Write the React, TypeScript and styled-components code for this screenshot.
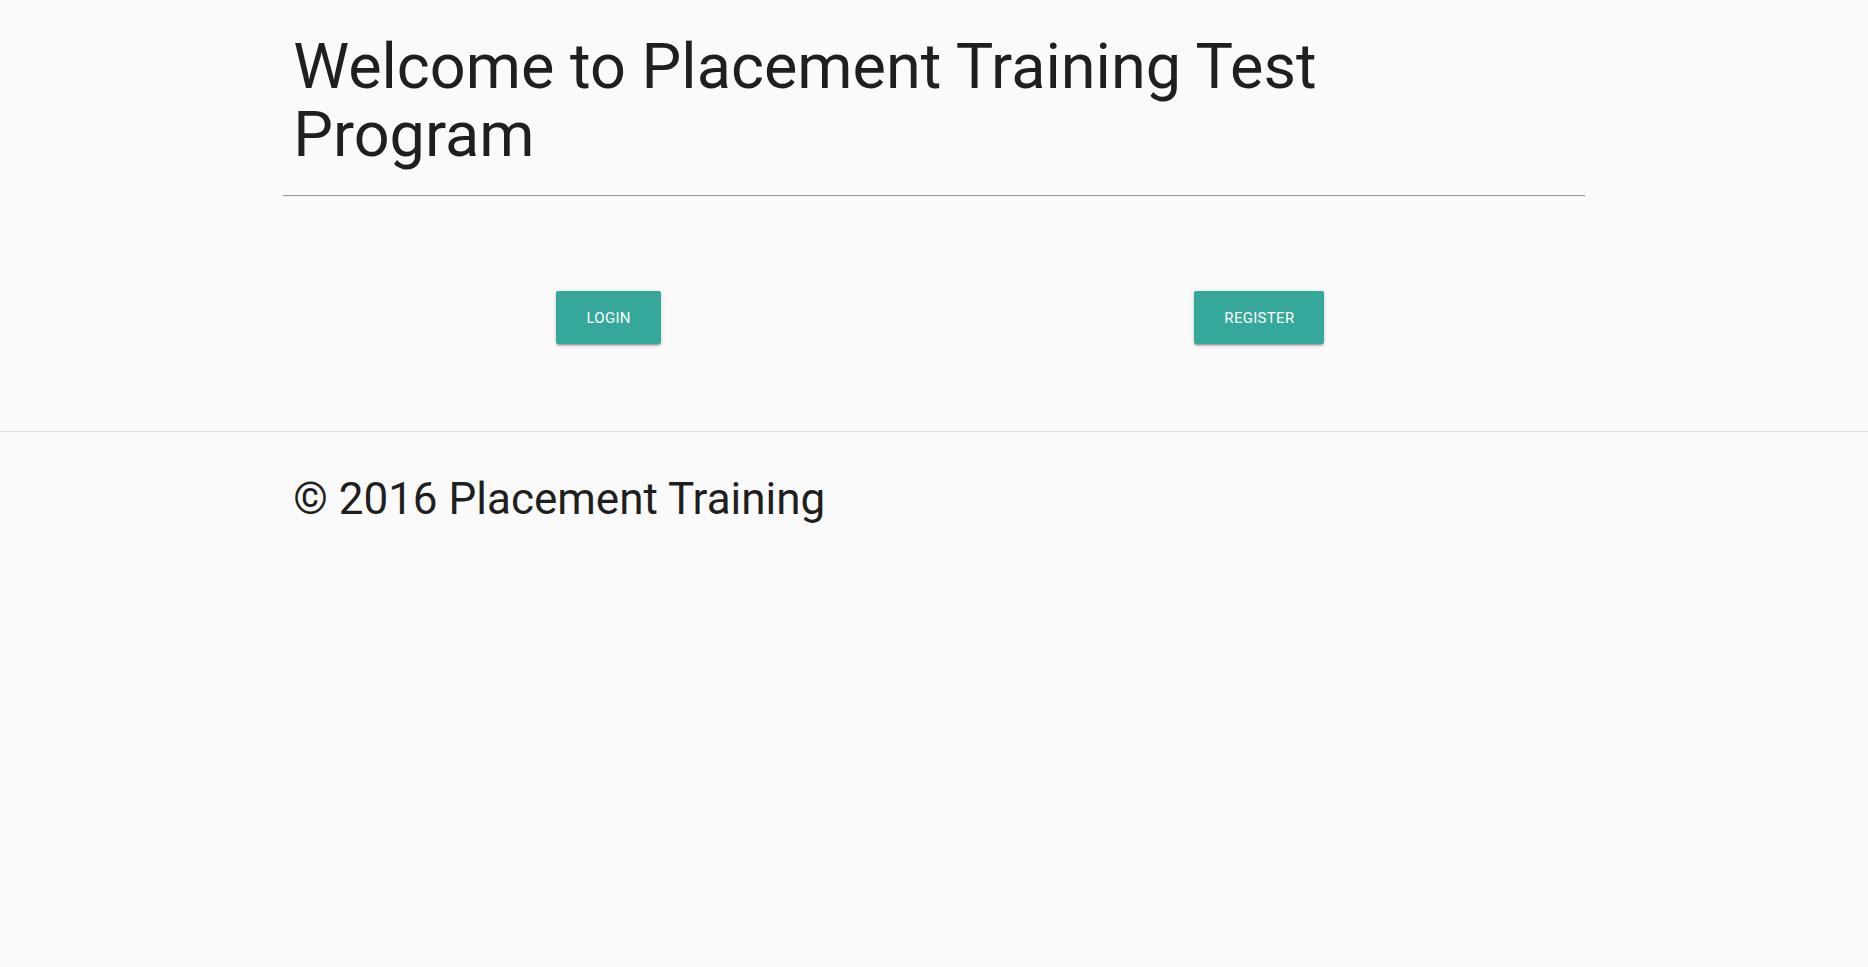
import React from "react";
import styled, { createGlobalStyle } from "styled-components";

const Global = createGlobalStyle`
  html, body { margin: 0; padding: 0; }
  body {
    background: #fafafa;
    font-family: Roboto, "Noto Sans", Arial, sans-serif;
    color: #212121;
    min-height: 967px;
  }
`;

const Container = styled.div`
  width: 70%;
  margin: 0 auto;
`;

const Title = styled.h1`
  margin: 33px 0 0;
  padding: 0 13px;
  max-width: 1150px;
  font-size: 63px;
  line-height: 68px;
  font-weight: 400;
  color: #1f1f1f;
`;

const Rule = styled.hr`
  margin: 26px 3px 0;
  border: 0;
  border-top: 1px solid #9c9c9c;
  border-bottom: 1px solid #ececec;
  height: 0;
`;

const ButtonRow = styled.div`
  display: grid;
  grid-template-columns: 1fr 1fr;
  padding: 94px 3px 87px;
`;

const Cell = styled.div`
  display: flex;
  justify-content: center;
`;

const Button = styled.button`
  height: 53px;
  padding: 0 30px;
  border: none;
  border-radius: 2px;
  background: #35a89b;
  color: #fff;
  font-family: Roboto, "Noto Sans", Arial, sans-serif;
  font-size: 15px;
  letter-spacing: 0.3px;
  text-transform: uppercase;
  cursor: pointer;
  box-shadow: 0 2px 2px 0 rgba(0, 0, 0, 0.14), 0 1px 5px 0 rgba(0, 0, 0, 0.12),
    0 3px 1px -2px rgba(0, 0, 0, 0.2);
`;

const Footer = styled.footer`
  border-top: 1px solid #e0e0e0;
  padding-top: 42px;
`;

const FooterText = styled.div`
  padding: 0 13px;
  font-size: 44px;
  line-height: 50px;
  color: #1f1f1f;
`;

export default function App() {
  return (
    <>
      <Global />
      <Container>
        <Title>Welcome to Placement Training Test Program</Title>
        <Rule />
        <ButtonRow>
          <Cell>
            <Button>Login</Button>
          </Cell>
          <Cell>
            <Button>Register</Button>
          </Cell>
        </ButtonRow>
      </Container>
      <Footer>
        <Container>
          <FooterText>© 2016 Placement Training</FooterText>
        </Container>
      </Footer>
    </>
  );
}
